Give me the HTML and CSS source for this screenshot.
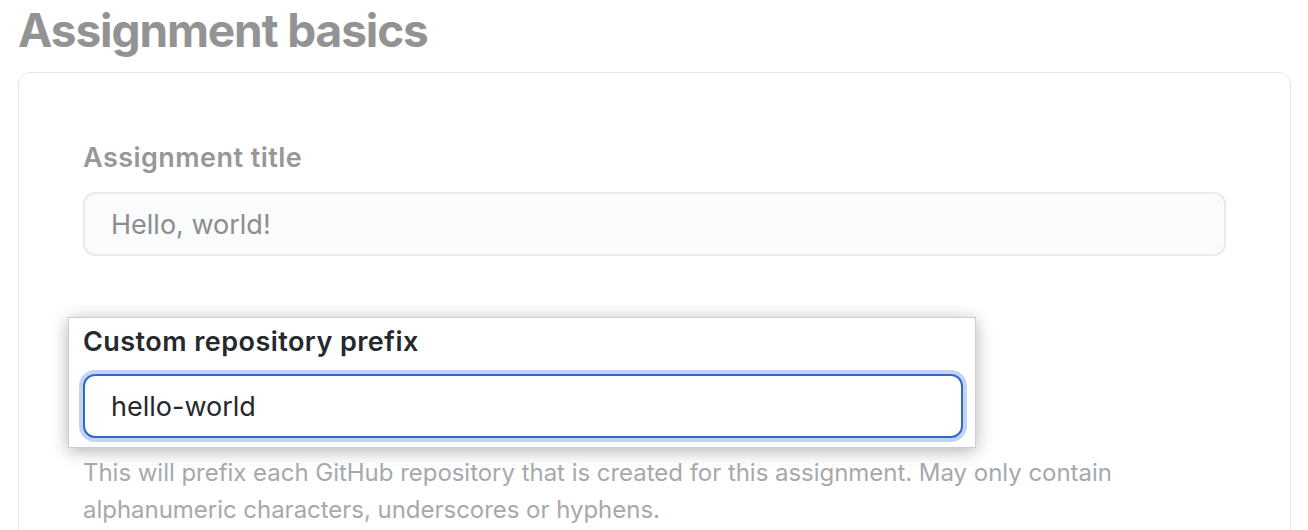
FILE: index.html
```html
<!DOCTYPE html>
<html lang="en">
<head>
<meta charset="utf-8">
<title>Assignment basics</title>
<link rel="stylesheet" href="styles.css">
</head>
<body>
<main class="page">
  <h1 class="page-title">Assignment basics</h1>
  <section class="card">
    <div class="field">
      <label class="field-label" for="title">Assignment title</label>
      <div class="text-input muted-input" id="title">Hello, world!</div>
    </div>
    <div class="field highlight">
      <label class="field-label strong" for="prefix">Custom repository prefix</label>
      <div class="text-input focused-input" id="prefix">hello-world</div>
    </div>
    <p class="help">This will prefix each GitHub repository that is created for this assignment. May only contain alphanumeric characters, underscores or hyphens.</p>
  </section>
</main>
</body>
</html>
```

FILE: styles.css
```css
html, body {
  margin: 0;
  padding: 0;
  background: #ffffff;
  overflow: hidden;
}

body {
  font-family: Inter, "Noto Sans", "Liberation Sans", sans-serif;
  width: 1308px;
  height: 530px;
}

.page {
  padding: 0 17px 0 18px;
}

.page-title {
  margin: 0;
  font-size: 46px;
  line-height: 60px;
  font-weight: 700;
  color: #939393;
  letter-spacing: -1.1px;
}

.card {
  margin-top: 12px;
  border: 1px solid #e4e6e9;
  border-radius: 12px;
  padding: 68px 64px 40px 64px;
  height: 600px;
}

.field-label {
  display: block;
  font-size: 27px;
  line-height: 34px;
  font-weight: 600;
  color: #979797;
  letter-spacing: 0.45px;
}

.text-input {
  box-sizing: border-box;
  margin-top: 17px;
  height: 64px;
  border-radius: 12px;
  padding: 0 26px;
  display: flex;
  align-items: center;
  font-size: 27px;
}

.muted-input {
  background: #fafbfc;
  border: 2px solid #e8eaed;
  color: #8d8d8d;
}

.highlight {
  margin: 61px 0 0 -15px;
  width: 908px;
  box-sizing: border-box;
  background: #ffffff;
  border: 1px solid #cdcdcd;
  box-shadow: 0 3px 16px rgba(0, 0, 0, 0.3);
  padding: 7px 12px 9px 14px;
}

.field-label.strong {
  color: #24292e;
}

.focused-input {
  margin-top: 15px;
  width: 880px;
  background: #ffffff;
  border: 2px solid #2f68d3;
  box-shadow: 0 0 0 4px #c3d4f1;
  color: #24292e;
}

.help {
  margin: 6px 0 0 0;
  font-size: 24px;
  line-height: 37px;
  color: #a6a9ac;
  letter-spacing: -0.03px;
}
```
